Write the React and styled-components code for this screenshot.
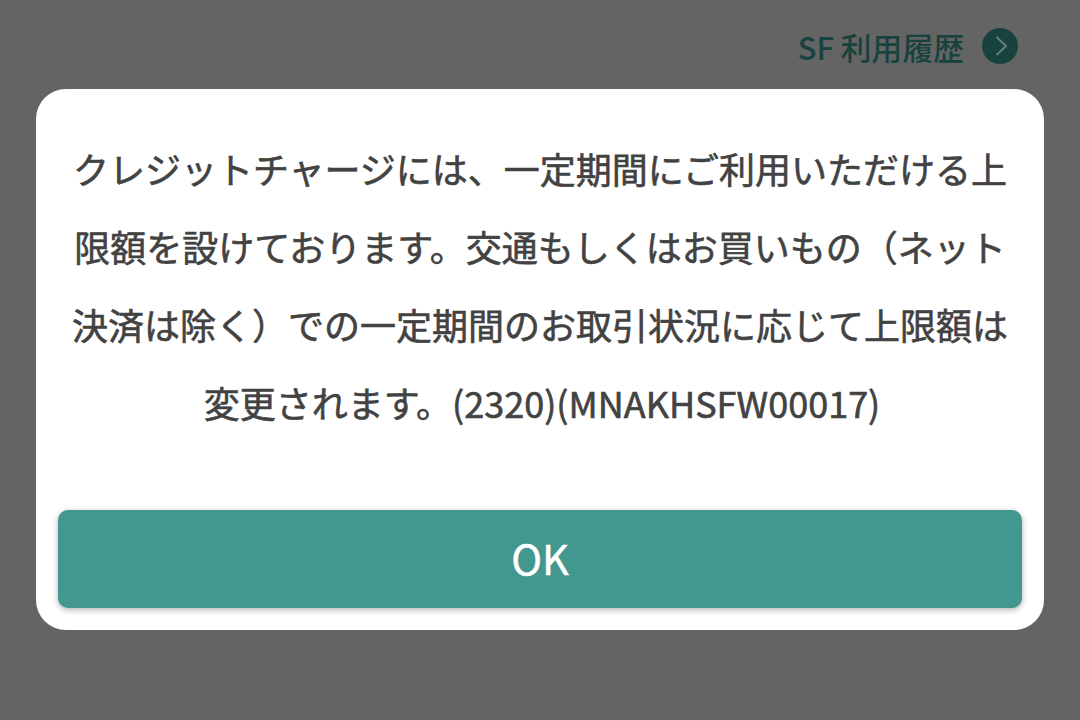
import React from 'react';
import styled, { createGlobalStyle } from 'styled-components';

const GlobalStyle = createGlobalStyle`
  html, body {
    margin: 0;
    padding: 0;
    height: 100%;
  }
  body {
    font-family: "Noto Sans CJK JP", "Noto Sans", sans-serif;
  }
`;

const Screen = styled.div`
  width: 1080px;
  height: 720px;
  background: #646464;
  overflow: hidden;
  display: flex;
  flex-direction: column;
`;

const TopRow = styled.div`
  height: 89px;
  display: flex;
  align-items: center;
  justify-content: flex-end;
  gap: 18px;
  padding: 3px 62px 0 0;
  box-sizing: border-box;
`;

const HistoryLabel = styled.span`
  font-size: 30.8px;
  font-weight: 500;
  color: #17423d;
`;

const ArrowBadge = styled.svg`
  width: 36px;
  height: 36px;
`;

const Dialog = styled.div`
  margin: 0 36px;
  height: 541px;
  box-sizing: border-box;
  background: #ffffff;
  border-radius: 30px;
  padding: 40px 22px 22px;
  display: flex;
  flex-direction: column;
  justify-content: space-between;
`;

const Message = styled.p`
  margin: 0;
  font-size: 36px;
  line-height: 78px;
  font-weight: 400;
  -webkit-text-stroke: 0.6px #424242;
  color: #424242;
  text-align: center;
  white-space: nowrap;
`;

const LastLine = styled.span`
  margin-left: 4px;
`;

const OkButton = styled.button`
  height: 98px;
  border: none;
  border-radius: 10px;
  background: #42978e;
  color: #ffffff;
  font-family: inherit;
  font-size: 41.5px;
  font-weight: 400;
  -webkit-text-stroke: 0.5px #ffffff;
  padding: 0 0 4px;
  box-shadow: 0 2px 6px rgba(0, 0, 0, 0.3);
`;

export default function App() {
  return (
    <>
      <GlobalStyle />
      <Screen>
        <TopRow>
          <HistoryLabel>SF 利用履歴</HistoryLabel>
          <ArrowBadge viewBox="0 0 36 36">
            <circle cx="18" cy="18" r="18" fill="#17423d" />
            <path d="M14.5 9l9.500 9-9.500 9" fill="none" stroke="#6f7f7c" strokeWidth="1.800" />
          </ArrowBadge>
        </TopRow>
        <Dialog>
          <Message>
            クレジットチャージには、一定期間にご利用いただける上<br />
            限額を設けております。交通もしくはお買いもの（ネット<br />
            決済は除く）での一定期間のお取引状況に応じて上限額は<br />
            <LastLine>変更されます。(2320)(MNAKHSFW00017)</LastLine>
          </Message>
          <OkButton>OK</OkButton>
        </Dialog>
      </Screen>
    </>
  );
}
